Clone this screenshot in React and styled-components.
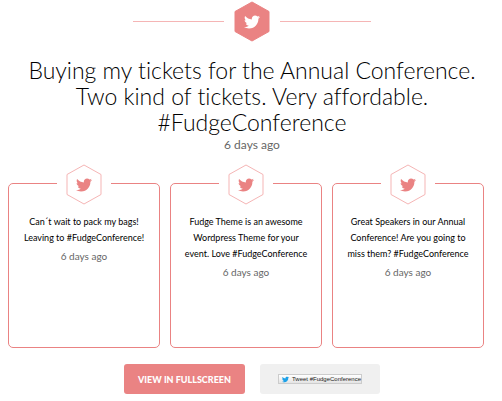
import React from 'react'
import styled, { createGlobalStyle } from 'styled-components'
import { FaTwitter } from 'react-icons/fa'

const Colors = {
  coral: '#ea8383',
  coral_light: '#f5b5b5',
  grey: '#666666',
  grey_background: '#f0f0f0',
  twitter: '#1da1e8',
}

const GlobalStyle = createGlobalStyle`
  * {
    box-sizing: border-box;
  }
  body {
    margin: 0;
    background: #ffffff;
    color: #000000;
    font-family: Lato, "Liberation Sans", sans-serif;
    font-variant-ligatures: none;
  }
`

const Main = styled.main`
  padding: 0 6px 0 8px;
`

const Divider = styled.div`
  display: flex;
  align-items: center;
  justify-content: center;
  gap: 10px;
  padding-top: 1px;
  hr {
    width: 91px;
    height: 1px;
    margin: 0;
    border: 0;
    background: ${Colors.coral_light};
  }
`

const Hexagon = styled.div`
  display: grid;
  place-items: center;
  width: 36px;
  height: 41px;
  color: ${props => (props.$filled ? '#ffffff' : Colors.coral)};
  > * {
    grid-area: 1 / 1;
  }
  .shape {
    width: 100%;
    height: 100%;
    fill: ${props => (props.$filled ? Colors.coral : '#ffffff')};
    stroke: ${props => (props.$filled ? Colors.coral : Colors.coral_light)};
  }
  .bird {
    width: 16px;
    height: 16px;
  }
`

const Featured = styled.section`
  margin-top: 15px;
  text-align: center;
  h1 {
    margin: 0 auto;
    max-width: 460px;
    font-size: 23px;
    font-weight: 300;
    line-height: 26px;
  }
`

const Time = styled.time`
  display: block;
  color: ${Colors.grey};
  font-size: ${props => (props.$large ? '12px' : '10px')};
  line-height: 20px;
`

const Cards = styled.section`
  display: grid;
  grid-template-columns: repeat(3, 1fr);
  gap: 10px;
  margin: 28px 12px 0 0;
`

const Card = styled.article`
  min-height: 165px;
  padding: 0 8px;
  border: 1px solid ${Colors.coral};
  border-radius: 5px;
  text-align: center;
  p {
    margin: 9px 0 0;
    font-size: 9px;
    line-height: 16px;
  }
`

// sits on the card's top border and cuts a gap in it
const Badge = styled.div`
  display: flex;
  justify-content: center;
  width: 54px;
  margin: -20px auto 0;
  background: #ffffff;
`

const Actions = styled.div`
  display: flex;
  justify-content: center;
  gap: 15px;
  margin-top: 16px;
`

const Button = styled.button`
  width: 121px;
  height: 30px;
  padding: 0;
  border: 0;
  border-radius: 3px;
  background: ${Colors.coral};
  color: #ffffff;
  font-family: inherit;
  font-size: 9px;
  font-weight: 900;
  cursor: pointer;
`

const TweetBox = styled.div`
  display: flex;
  align-items: center;
  justify-content: center;
  width: 120px;
  height: 30px;
  border-radius: 3px;
  background: ${Colors.grey_background};
`

const TweetLink = styled.a`
  display: flex;
  align-items: center;
  gap: 3px;
  height: 10px;
  padding: 0 0 0 3px;
  border: 1px solid #cccccc;
  background: linear-gradient(#ffffff, #e4e4e4);
  color: #222222;
  font-family: "Liberation Sans", sans-serif;
  font-size: 6px;
  line-height: 8px;
  text-decoration: none;
  white-space: nowrap;
  svg {
    width: 7px;
    height: 7px;
    color: ${Colors.twitter};
  }
`

const tweets = [
  { id: 1, lines: ['Can´t wait to pack my bags!', 'Leaving to #FudgeConference!'], time: '6 days ago' },
  { id: 2, lines: ['Fudge Theme is an awesome', 'Wordpress Theme for your', 'event. Love #FudgeConference'], time: '6 days ago' },
  { id: 3, lines: ['Great Speakers in our Annual', 'Conference! Are you going to', 'miss them? #FudgeConference'], time: '6 days ago' },
]

const Lines = ({ lines }) => lines.map((line, i) => (
  <React.Fragment key={line}>
    {i > 0 && <br />}
    {line}
  </React.Fragment>
))

const TwitterHexagon = ({ filled }) => (
  <Hexagon $filled={filled}>
    <svg className='shape' viewBox='0 0 36 41' aria-hidden='true'>
      <path d='M18 1 L35 10.5 V30.5 L18 40 L1 30.5 V10.5 Z' strokeLinejoin='round' />
    </svg>
    <FaTwitter className='bird' />
  </Hexagon>
)

const App = () => {
  return (
    <>
      <GlobalStyle />
      <Main>
        <Divider>
          <hr />
          <TwitterHexagon filled />
          <hr />
        </Divider>

        <Featured>
          <h1>
            <Lines lines={['Buying my tickets for the Annual Conference.', 'Two kind of tickets. Very affordable.', '#FudgeConference']} />
          </h1>
          <Time $large>6 days ago</Time>
        </Featured>

        <Cards>
          {tweets.map(tweet => (
            <Card key={tweet.id}>
              <Badge><TwitterHexagon /></Badge>
              <p><Lines lines={tweet.lines} /></p>
              <Time>{tweet.time}</Time>
            </Card>
          ))}
        </Cards>

        <Actions>
          <Button type='button'>VIEW IN FULLSCREEN</Button>
          <TweetBox>
            <TweetLink href='#tweet'><FaTwitter />Tweet #FudgeConference</TweetLink>
          </TweetBox>
        </Actions>
      </Main>
    </>
  )
}

export default App
